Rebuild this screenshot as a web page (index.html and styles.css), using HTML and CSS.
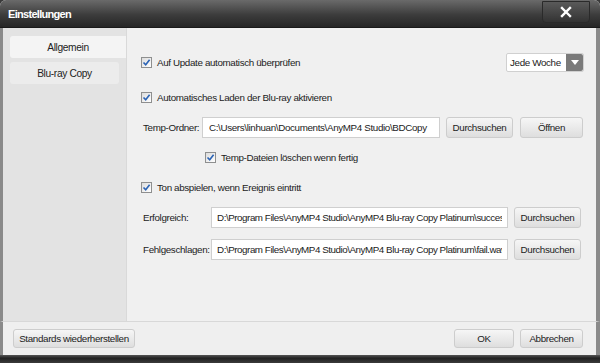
FILE: index.html
```html
<!DOCTYPE html>
<html lang="de">
<head>
  <meta charset="UTF-8" />
  <title>Einstellungen</title>
  <link rel="stylesheet" href="styles.css">
</head>
<body>
  <div class="window">
    <div class="titlebar">
      <span class="title">Einstellungen</span>
      <button class="close">
        <svg width="12" height="12" viewBox="0 0 12 12"><path d="M2 2 L10 10 M10 2 L2 10" stroke="#fff" stroke-width="2.4" stroke-linecap="square"/></svg>
      </button>
    </div>

    <div class="main">
      <div class="sidebar">
        <div class="tab active">Allgemein</div>
        <div class="tab">Blu-ray Copy</div>
      </div>

      <div class="content">
        <div class="row r1">
          <label class="check"><span class="box"><svg width="9" height="9" viewBox="0 0 9 9"><path d="M1.5 4.5 L3.7 6.8 L7.6 1.8" fill="none" stroke="#2b63b5" stroke-width="1.6"/></svg></span>Auf Update automatisch überprüfen</label>
          <div class="select">
            <span class="select-text">Jede Woche</span>
            <span class="select-arrow"><svg width="8" height="5" viewBox="0 0 8 5"><path d="M0 0 H8 L4 5 Z" fill="#fff"/></svg></span>
          </div>
        </div>

        <div class="row r2">
          <label class="check"><span class="box"><svg width="9" height="9" viewBox="0 0 9 9"><path d="M1.5 4.5 L3.7 6.8 L7.6 1.8" fill="none" stroke="#2b63b5" stroke-width="1.6"/></svg></span>Automatisches Laden der Blu-ray aktivieren</label>
        </div>

        <div class="row r3">
          <span class="label temp">Temp-Ordner:</span>
          <input class="field temp-field" type="text" value="C:\Users\linhuan\Documents\AnyMP4 Studio\BDCopy" />
          <button class="btn">Durchsuchen</button>
          <button class="btn open">Öffnen</button>
        </div>

        <div class="row r4 indent">
          <label class="check"><span class="box"><svg width="9" height="9" viewBox="0 0 9 9"><path d="M1.5 4.5 L3.7 6.8 L7.6 1.8" fill="none" stroke="#2b63b5" stroke-width="1.6"/></svg></span>Temp-Dateien löschen wenn fertig</label>
        </div>

        <div class="row r5">
          <label class="check"><span class="box"><svg width="9" height="9" viewBox="0 0 9 9"><path d="M1.5 4.5 L3.7 6.8 L7.6 1.8" fill="none" stroke="#2b63b5" stroke-width="1.6"/></svg></span>Ton abspielen, wenn Ereignis eintritt</label>
        </div>

        <div class="row r6">
          <span class="label sound">Erfolgreich:</span>
          <input class="field sound-field" type="text" value="D:\Program Files\AnyMP4 Studio\AnyMP4 Blu-ray Copy Platinum\success.wav" />
          <button class="btn">Durchsuchen</button>
        </div>

        <div class="row r7">
          <span class="label sound">Fehlgeschlagen:</span>
          <input class="field sound-field" type="text" value="D:\Program Files\AnyMP4 Studio\AnyMP4 Blu-ray Copy Platinum\fail.wav" />
          <button class="btn">Durchsuchen</button>
        </div>
      </div>
    </div>

    <div class="footer">
      <button class="btn reset">Standards wiederherstellen</button>
      <div class="footer-right">
        <button class="btn ok">OK</button>
        <button class="btn cancel">Abbrechen</button>
      </div>
    </div>
    <div class="bottom"></div>
  </div>
</body>
</html>
```

FILE: styles.css
```css
* {
  box-sizing: border-box;
}

body {
  margin: 0;
  font-family: "Liberation Sans", Arial, sans-serif;
  font-size: 9.8px;
  letter-spacing: -0.35px;
  color: #222;
  background: #3a3a3a;
  white-space: nowrap;
}

.window {
  width: 600px;
  height: 363px;
  display: flex;
  flex-direction: column;
  background: #efefef;
  border-radius: 6px 6px 0 0;
  overflow: hidden;
}

.titlebar {
  height: 28px;
  flex: none;
  display: flex;
  align-items: center;
  justify-content: space-between;
  padding: 0 10px 0 8px;
  background: linear-gradient(to bottom, #6a6a6a, #3c3c3c 55%, #262626);
  border-bottom: 1px solid #1a1a1a;
}

.title {
  color: #fff;
  font-weight: bold;
  font-size: 11px;
  letter-spacing: -0.7px;
}

.close {
  width: 48px;
  height: 22px;
  margin-top: -3px;
  border: 1px solid #2a2a2a;
  border-radius: 0 0 4px 4px;
  background: linear-gradient(to bottom, #5a5a5a, #333);
  display: flex;
  align-items: center;
  justify-content: center;
  padding: 0;
}

.main {
  flex: 1;
  display: flex;
  border-left: 3px solid #8a8a8a;
  border-right: 4px solid #8a8a8a;
  border-bottom: 1px solid #d8d8d8;
}

.sidebar {
  width: 124px;
  flex: none;
  background: #e3e3e3;
  border-right: 1px solid #d9d9d9;
  padding: 8px 0 0 7px;
}

.tab {
  height: 22px;
  margin-bottom: 4px;
  display: flex;
  align-items: center;
  justify-content: center;
  background: #ececec;
  border-radius: 3px;
  margin-right: 7px;
  font-size: 10.2px;
}

.tab.active {
  background: #f4f4f4;
  margin-right: 0;
  border-radius: 3px 0 0 3px;
}

.content {
  flex: 1;
  background: #f0f0f0;
  padding: 23px 12px 0 14px;
}

.row {
  height: 22px;
  display: flex;
  align-items: center;
}

.r2 { margin-top: 13px; }
.r3 { margin-top: 8px; }
.r4 { margin-top: 8px; }
.r5 { margin-top: 8px; }
.r6 { margin-top: 8px; }
.r7 { margin-top: 10px; }

.indent {
  padding-left: 64px;
}

.check {
  display: flex;
  align-items: center;
}

.box {
  width: 11px;
  height: 11px;
  margin-right: 5px;
  border: 1px solid #8e8f8f;
  background: linear-gradient(to bottom right, #dcdcdc, #fff);
  display: flex;
  align-items: center;
  justify-content: center;
}

.select {
  margin-left: auto;
  width: 78px;
  height: 19px;
  display: flex;
  border: 1px solid #d0d0d0;
  border-radius: 2px;
  background: #fff;
}

.select-text {
  flex: 1;
  padding-left: 3px;
  line-height: 17px;
}

.select-arrow {
  width: 17px;
  background: #7a7a7a;
  display: flex;
  align-items: center;
  justify-content: center;
  border-radius: 0 2px 2px 0;
}

.label.temp {
  width: 61px;
  padding-left: 2px;
}

.label.sound {
  width: 70px;
  padding-left: 2px;
}

.field {
  height: 21px;
  border: 1px solid #cfcfcf;
  background: #fff;
  font: inherit;
  letter-spacing: inherit;
  color: #222;
  padding: 0 6px;
}

.temp-field {
  width: 238px;
}

.sound-field {
  width: 297px;
  padding: 0 5px;
  letter-spacing: -0.45px;
}

.btn {
  height: 21px;
  padding: 0;
  border: 1px solid #cdcdcd;
  border-radius: 3px;
  background: linear-gradient(to bottom, #f6f6f6, #dedede);
  font: inherit;
  letter-spacing: inherit;
  color: #222;
}

.row .btn {
  width: 67px;
  margin-left: 6px;
}

.row .btn.open {
  width: 63px;
  margin-left: 7px;
}

.footer {
  height: 33px;
  flex: none;
  display: flex;
  align-items: center;
  padding: 0 13px 0 13px;
  border-left: 3px solid #8a8a8a;
  border-right: 4px solid #8a8a8a;
  background: #efefef;
}

.footer .btn {
  height: 19px;
}

.reset {
  width: 122px;
  margin-left: -3px;
}

.footer-right {
  margin-left: auto;
  display: flex;
  gap: 6px;
}

.ok {
  width: 60px;
}

.cancel {
  width: 63px;
}

.bottom {
  height: 8px;
  flex: none;
  background: linear-gradient(to bottom, #555, #222 40%, #3a3a3a);
}
```
